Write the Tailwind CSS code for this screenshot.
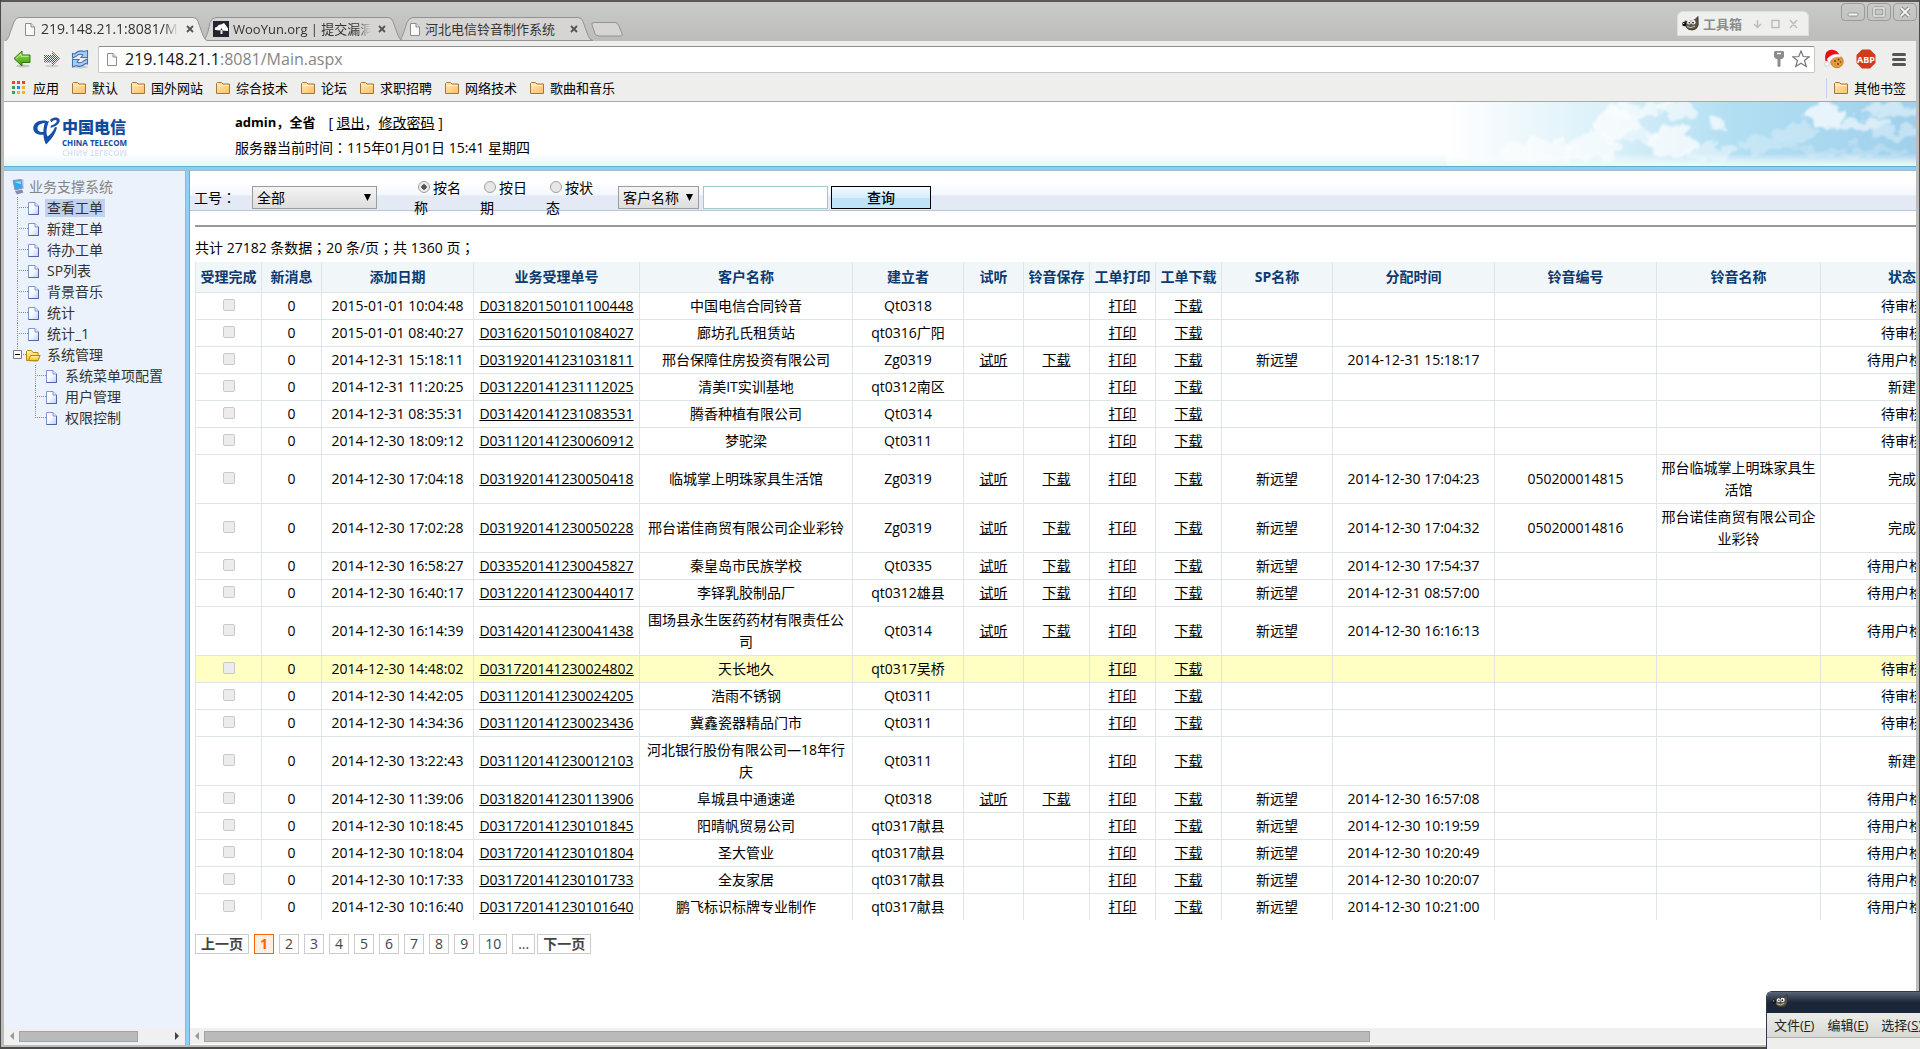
<!DOCTYPE html>
<html lang="zh-CN">
<head>
<meta charset="utf-8">
<title>219.148.21.1:8081/Main.aspx</title>
<script src="https://cdn.jsdelivr.net/npm/@tailwindcss/browser@4"></script>
</head>
<body class="font-['Open_Sans','Noto_Sans_CJK_SC',sans-serif] text-sm leading-5 text-black">
<svg class="absolute h-0 w-0" aria-hidden="true">
  <defs>
    <linearGradient id="gFolder" x1="0" y1="0" x2="1" y2="1"><stop offset="0" stop-color="#ffe9b8"/><stop offset="1" stop-color="#fdbf66"/></linearGradient>
    <linearGradient id="gDoc" x1="0" y1="0" x2="1" y2="1"><stop offset="0" stop-color="#ffffff"/><stop offset=".5" stop-color="#f4f8ff"/><stop offset="1" stop-color="#b9cdf3"/></linearGradient>
    <linearGradient id="gGreen" x1="0" y1="0" x2="0" y2="1"><stop offset="0" stop-color="#9be04e"/><stop offset="1" stop-color="#3d9a12"/></linearGradient>
    <linearGradient id="gYellow" x1="0" y1="0" x2="0" y2="1"><stop offset="0" stop-color="#fff6a0"/><stop offset="1" stop-color="#f2c321"/></linearGradient>
    <pattern id="pDither" width="2" height="2" patternUnits="userSpaceOnUse"><rect width="1" height="1" fill="#2f6b22"/><rect x="1" y="1" width="1" height="1" fill="#2f6b22"/></pattern>
  </defs>
  <symbol id="folder" viewBox="0 0 16 14"><path d="M1.5 12.5v-10l1-1h4l1.500 1.500h6.500v9.500z" fill="url(#gFolder)" stroke="#a5763c"/><path d="M2.500 4.500h11" stroke="#fff3d3"/></symbol>
  <symbol id="page" viewBox="0 0 12 15"><path d="M1.500 1.500h5.500l3.500 3.500v8.500h-9z" fill="#fafafa" stroke="#8d8d8d"/><path d="M7 1.500v3.500h3.500" fill="#e4e4e4" stroke="#8d8d8d"/></symbol>
  <symbol id="doc" viewBox="0 0 13 15"><path d="M1.500 1.500h6.500l3.500 3.500v8.500h-10z" fill="url(#gDoc)" stroke="#7f97cf"/><path d="M8 1.500v3.500h3.500" fill="#dfe9fb" stroke="#7f97cf"/><path d="M11.500 5v8.500h-10" fill="none" stroke="#4e64a6"/></symbol>
  <symbol id="gimp" viewBox="0 0 17 15"><path d="M3 5l3 0.500 4-.5 3-1.500L16 .5l.2 8.500q-1 4.500-5.500 5-4.500.5-7-3.500z" fill="#5a5548" stroke="#2e2c26" stroke-width=".8"/><circle cx="7" cy="6.500" r="2" fill="#fff"/><circle cx="11.300" cy="6.300" r="2.200" fill="#fff"/><circle cx="7.300" cy="6.700" r=".8"/><circle cx="11" cy="6.600" r=".9"/><ellipse cx="2.200" cy="8" rx="2" ry="2.200" fill="#111"/><circle cx="1.700" cy="7.400" r=".7" fill="#ddd"/><path d="M5 10.500q4 2.500 8-.5" stroke="#d8d2c2" stroke-width=".9" fill="none"/></symbol>
</svg>

<div class="flex h-screen flex-col overflow-hidden border-x border-b-2 border-[#4d4a4a] bg-[#bcbcba]">
  <!-- title bar with tabs -->
  <header class="relative flex h-[41px] shrink-0 items-end justify-between border-t-2 border-[#5b5757] bg-linear-to-b from-[#cacac8] to-[#bcbcba]">
    <nav class="relative flex h-6 items-end pl-1 text-[13px] text-[#333]">
      <svg class="absolute left-1 top-0 h-6 w-[620px]" viewBox="0 0 620 24" fill="none">
        <path d="M392 23.500c4 0 5-3 7-9l3-9q2-5 6-5h165q4 0 5 4l5 14q2 5 5 5z" fill="#d7d5d4" stroke="#949391"/>
        <path d="M196 23.500c4 0 5-3 7-9l2-9q2-5 6-5h172q4 0 5 4l5 14q2 5 5 5z" fill="#d7d5d4" stroke="#949391"/>
        <path d="M0 24c3-1 4-5 5-8l4-11q2-4.500 5-4.500h174q4 0 5 4l5 14q2 5 5 5.500z" fill="#eeeeec"/>
        <path d="M0 24c3-1 4-5 5-8l4-11q2-4.500 5-4.500h174q4 0 5 4l5 14q2 5 5 5.500" stroke="#949391"/>
        <path d="M587 8q-1-2.500 2-2.500h21q2.500 0 3.500 2.500l3.500 8.500q1 2.500-1 2.500h-22q-3 0-4-2.500z" fill="#d7d5d4" stroke="#949391"/>
      </svg>
      <a href="#" class="relative flex h-6 w-[198px] items-center pl-[19px]"><svg class="mr-[5px] h-[15px] w-3 shrink-0"><use href="#page"/></svg><span class="w-[137px] overflow-hidden whitespace-nowrap text-sm mask-r-from-90%">219.148.21.1:8081/Ma</span></a>
      <button aria-label="关闭标签页" class="absolute left-[185px] top-2 h-2 w-2"><svg viewBox="0 0 8 8"><path d="M1 1l6 6M7 1l-6 6" stroke="#555" stroke-width="1.800"/></svg></button>
      <a href="#" class="relative flex h-6 w-[196px] items-center pl-[10px]"><svg class="mr-1 h-4 w-4 shrink-0" viewBox="0 0 16 16"><rect width="16" height="16" fill="#23252e"/><path d="M2 9q-1-3 2-3 1-3 4-2.500L11 2l3 4q1.500 1 1 4z" fill="#fff"/><path d="M6 12h5l-2.500-5z" fill="#23252e"/><path d="M7.500 9h2v4h-2z" fill="#e8e8e8"/></svg><span class="w-[138px] overflow-hidden whitespace-nowrap mask-r-from-90%">WooYun.org | 提交漏洞</span></a>
      <button aria-label="关闭标签页" class="absolute left-[377px] top-2 h-2 w-2"><svg viewBox="0 0 8 8"><path d="M1 1l6 6M7 1l-6 6" stroke="#555" stroke-width="1.800"/></svg></button>
      <a href="#" class="relative flex h-6 w-[180px] items-center pl-[10px]"><svg class="mr-1 h-[15px] w-3 shrink-0"><use href="#page"/></svg><span class="whitespace-nowrap">河北电信铃音制作系统</span></a>
      <button aria-label="关闭标签页" class="absolute left-[569px] top-2 h-2 w-2"><svg viewBox="0 0 8 8"><path d="M1 1l6 6M7 1l-6 6" stroke="#555" stroke-width="1.800"/></svg></button>
    </nav>
    <div class="flex h-full items-start pr-[2px]">
      <div class="mr-8 mt-[9px] flex h-[25px] w-[132px] items-center gap-1 rounded-t-md border border-[#dededc] bg-[#efefed] pl-1 text-[13px] font-bold text-[#8c8c8a]">
        <svg class="h-[15px] w-[17px]"><use href="#gimp"/></svg><span class="w-[42px]">工具箱</span>
        <svg class="ml-1 h-3 w-[46px]" viewBox="0 0 46 12" fill="none" stroke="#bdbdbb" stroke-width="1.500"><path d="M4.500 2v7M1 6l3.500 3.500L8 6M19 2.500h7v7h-7zM37 2l7 8M44 2l-7 8"/></svg>
      </div>
      <div class="mt-[1px] flex gap-[2px]">
        <button aria-label="最小化" class="h-[18px] w-6 rounded-sm border border-[#9b9b99]"><svg viewBox="0 0 22 16"><rect x="6" y="9" width="10" height="3" rx="1" fill="#f4f4f4" stroke="#888" stroke-width=".8"/></svg></button>
        <button aria-label="最大化" class="h-[18px] w-6 rounded-sm border border-[#9b9b99]"><svg viewBox="0 0 22 16" fill="none"><rect x="6" y="4" width="10" height="8" rx="1" stroke="#888" stroke-width="3"/><rect x="6" y="4" width="10" height="8" stroke="#f4f4f4" stroke-width="1.400"/></svg></button>
        <button aria-label="关闭" class="h-[18px] w-6 rounded-sm border border-[#9b9b99]"><svg viewBox="0 0 22 16" fill="none"><path d="M7 4l8 8M15 4l-8 8" stroke="#888" stroke-width="4"/><path d="M7 4l8 8M15 4l-8 8" stroke="#f4f4f4" stroke-width="2"/></svg></button>
      </div>
    </div>
  </header>

  <div class="mx-[3px] mb-[2px] flex min-h-0 flex-1 flex-col bg-white">
    <!-- address bar -->
    <div class="flex h-9 shrink-0 items-center bg-[#eeeeec] pl-[9px] pr-[10px]">
      <button aria-label="后退" class="mr-3"><svg class="h-[18px] w-[18px]" viewBox="0 0 18 18"><ellipse cx="10" cy="16" rx="7" ry="1.500" fill="#c4c4c0"/><path d="M1 8.500L9 1v4h8v7.500H9V16z" fill="url(#gGreen)" stroke="#2d7a0c"/><path d="M3 8.500L8 4v2.300h7.500" stroke="#c9f29c" fill="none"/></svg></button>
      <button aria-label="前进" class="mr-[9px]"><svg class="h-[18px] w-[18px]" viewBox="0 0 18 18"><ellipse cx="9" cy="16" rx="7" ry="1.500" fill="#d2d2ce"/><path d="M17 8.500L9 1v4H1v7.500h8V16z" fill="url(#pDither)"/></svg></button>
      <button aria-label="重新加载" class="mr-2"><svg class="h-5 w-5" viewBox="0 0 20 20"><ellipse cx="10" cy="18" rx="8" ry="1.500" fill="#c9cdd2"/><path d="M2.500 9V4.500L4.500 5Q9 .5 14 2.500L17.500 1.500V8.500H11l2-2.500Q9 4 6.500 7z" fill="#a9cdf2" stroke="#3f73b8" stroke-width="1.100"/><path d="M17.500 10v5l-2-.500Q11 19 6 16.500L2.500 18v-7.500H9L7 13q4 2 6.500-1z" fill="#a9cdf2" stroke="#3f73b8" stroke-width="1.100"/></svg></button>
      <div class="relative flex h-[27px] flex-1 items-center rounded-xs border border-[#c6c6c4] border-t-[#8e8e8c] bg-white pl-[7px] pr-1">
        <svg class="mr-[7px] h-[15px] w-3"><use href="#page"/></svg>
        <a href="#" class="flex-1 text-base text-[#868686]"><span class="text-[#111]">219.148.21.1</span>:8081/Main.aspx</a>
        <svg class="mr-2 h-4 w-[10px]" viewBox="0 0 10 16"><path d="M1 0h8l1 1v5l-2 2H6.500v7l-1 1h-1l-1-1V8H2L0 6V1z" fill="#8c8c8c"/><path d="M3 2.500h4" stroke="#fff" stroke-width="1.400"/></svg>
        <svg class="h-[18px] w-[18px]" viewBox="0 0 18 18"><path d="M9 1l2.200 5.500 6 .3-4.700 3.700 1.700 6L9 13.200 3.800 16.500l1.700-6L.8 6.800l6-.3z" fill="#fff" stroke="#777" stroke-width="1.200"/></svg>
      </div>
      <svg class="ml-[9px] h-5 w-5" viewBox="0 0 20 20"><circle cx="13" cy="12.500" r="6.300" fill="#e29a3c" stroke="#b9701f" stroke-width=".7"/><g fill="#6b3410"><circle cx="11" cy="12" r=".9"/><circle cx="14.500" cy="10.500" r=".9"/><circle cx="14" cy="15" r=".9"/><circle cx="16.500" cy="13" r=".8"/></g><path d="M1.500 12Q-.5 2 7 .800 13 0 16 7l-5 1-8 4z" fill="#e80f12"/><path d="M3 10q5-6 13-4.500l.5 2.500Q9 7 5 13.500z" fill="#fff" stroke="#ddd" stroke-width=".4"/><circle cx="3" cy="15" r="2.300" fill="#fff" stroke="#bbb" stroke-width=".6"/></svg>
      <svg class="ml-3 h-5 w-5" viewBox="0 0 20 20"><path d="M6 .500h8L19.500 6v8L14 19.500H6L.5 14V6z" fill="#d33a1c"/><text x="10" y="13.500" text-anchor="middle" class="fill-white font-['Open_Sans',sans-serif] text-[9px] font-bold">ABP</text></svg>
      <button aria-label="菜单" class="ml-4 flex w-[14px] flex-col gap-[2px]"><span class="h-[3px] rounded-xs bg-[#555]"></span><span class="h-[3px] rounded-xs bg-[#555]"></span><span class="h-[3px] rounded-xs bg-[#555]"></span></button>
    </div>

    <!-- bookmarks -->
    <nav class="flex h-[25px] shrink-0 items-center border-b border-[#a8a8a6] bg-[#eeeeec] pb-[3px] pl-2 pr-[10px] text-[13px]">
      <a href="#" class="mr-3 flex items-center gap-[7px]"><svg class="h-[14px] w-[14px]" viewBox="0 0 14 14"><path d="M0 0h3v3H0zM5 0h3v3H5zM10 0h3v3h-3z" fill="#e8443a"/><path d="M0 5h3v3H0z" fill="#33a35a"/><path d="M5 5h3v3H5z" fill="#2a85e8"/><path d="M10 5h3v3h-3zM5 10h3v3H5zM10 10h3v3h-3z" fill="#f0b429"/><path d="M0 10h3v3H0z" fill="#33a35a"/></svg>应用</a>
      <a href="#" class="mr-3 flex items-center gap-[5px]"><svg class="h-[14px] w-4"><use href="#folder"/></svg>默认</a>
      <a href="#" class="mr-3 flex items-center gap-[5px]"><svg class="h-[14px] w-4"><use href="#folder"/></svg>国外网站</a>
      <a href="#" class="mr-3 flex items-center gap-[5px]"><svg class="h-[14px] w-4"><use href="#folder"/></svg>综合技术</a>
      <a href="#" class="mr-3 flex items-center gap-[5px]"><svg class="h-[14px] w-4"><use href="#folder"/></svg>论坛</a>
      <a href="#" class="mr-3 flex items-center gap-[5px]"><svg class="h-[14px] w-4"><use href="#folder"/></svg>求职招聘</a>
      <a href="#" class="mr-3 flex items-center gap-[5px]"><svg class="h-[14px] w-4"><use href="#folder"/></svg>网络技术</a>
      <a href="#" class="flex items-center gap-[5px]"><svg class="h-[14px] w-4"><use href="#folder"/></svg>歌曲和音乐</a>
      <a href="#" class="ml-auto flex h-5 items-center gap-[5px] border-l border-[#c3d3e6] pl-[6px]"><svg class="h-[14px] w-4"><use href="#folder"/></svg>其他书签</a>
    </nav>

    <!-- site banner -->
    <div class="relative flex h-16 shrink-0 bg-linear-to-b from-white from-80% to-[#e6f5fd]">
      <svg class="absolute right-0 top-0 h-full w-[470px]" viewBox="0 0 470 64" preserveAspectRatio="none">
        <defs>
          <linearGradient id="sky" x1="0" x2="1"><stop offset="0" stop-color="#fff"/><stop offset=".35" stop-color="#d9f0f9"/><stop offset=".6" stop-color="#b3dff2"/><stop offset="1" stop-color="#9fd0ec"/></linearGradient>
          <linearGradient id="fade" x1="0" x2="0" y1="0" y2="1"><stop offset=".8" stop-color="#fff" stop-opacity="0"/><stop offset="1" stop-color="#eef9fe"/></linearGradient>
          <filter id="fluff" x="-5%" y="-20%" width="110%" height="140%"><feTurbulence type="fractalNoise" baseFrequency=".07" numOctaves="4" seed="4" result="n"/><feDisplacementMap in="SourceGraphic" in2="n" scale="22" xChannelSelector="R" yChannelSelector="G"/><feGaussianBlur stdDeviation=".8"/></filter>
        </defs>
        <rect width="470" height="64" fill="url(#sky)"/>
        <g filter="url(#fluff)" fill="#fff" opacity=".85">
          <ellipse cx="90" cy="50" rx="36" ry="12" opacity=".7"/><ellipse cx="145" cy="45" rx="28" ry="15" opacity=".75"/>
          <ellipse cx="168" cy="22" rx="22" ry="16" opacity=".85"/><ellipse cx="190" cy="8" rx="34" ry="7" opacity=".75"/>
          <ellipse cx="195" cy="34" rx="22" ry="9" opacity=".5"/><ellipse cx="226" cy="40" rx="26" ry="15" opacity=".85"/><ellipse cx="232" cy="8" rx="16" ry="10" opacity=".7"/>
          <ellipse cx="272" cy="22" rx="6" ry="6" opacity=".8"/><ellipse cx="265" cy="50" rx="26" ry="9" opacity=".5"/>
          <ellipse cx="320" cy="42" rx="28" ry="9" opacity=".3"/><ellipse cx="350" cy="30" rx="24" ry="8" opacity=".35"/>
          <ellipse cx="378" cy="12" rx="22" ry="10" opacity=".85"/><ellipse cx="412" cy="22" rx="34" ry="6" opacity=".7"/><ellipse cx="445" cy="8" rx="32" ry="7" opacity=".55"/><ellipse cx="450" cy="30" rx="28" ry="5" opacity=".45"/><ellipse cx="400" cy="50" rx="60" ry="5" opacity=".25"/>
        </g>
        <rect width="470" height="64" fill="url(#fade)"/>
      </svg>
      <a href="#" aria-label="中国电信" class="relative flex w-[231px] gap-[2px] pl-[29px] pt-[13px] text-[#114b9e]">
        <svg class="mt-[2px] h-7 w-[27px]" viewBox="0 0 27 28" fill="#1450a8"><path d="M14 4C5 2-1 7 .5 13c1 4 6 5.500 11 4.500v-2.500c-4 .5-7-.5-7-4C4.500 8 8 5.500 14 6z"/><path d="M12 5l4-1c-2 5-3.500 11-1.500 15.500 3-2 6-5.500 7.500-9.500l2 .5c-1.500 6-5.500 12-11 17-2.500-5-4-13-1-22.500z"/><path d="M17 3c2-3 8-3.500 9.500-.5 1 3-2.500 7-9 8.500l.5-2.500c4-1 6.500-3.500 5.500-5-1-1-3.500-.5-5 2z"/></svg>
        <span class="flex flex-col">
          <span class="text-base font-black leading-6">中国电信</span>
          <span class="text-[8px] font-bold leading-2">CHINA TELECOM</span>
          <span aria-hidden="true" class="-scale-y-100 text-[8px] font-bold leading-3 opacity-15">CHINA TELECOM</span>
        </span>
      </a>
      <div class="relative pt-[10px]">
        <p class="flex gap-[13px]"><b class="text-[13px]">admin<span class="font-['Noto_Sans_CJK_TC',sans-serif]">，</span>全省</b><span>[ <a href="#" class="underline">退出</a><span class="font-['Noto_Sans_CJK_TC',sans-serif]">，</span><a href="#" class="underline">修改密码</a> ]</span></p>
        <p class="mt-1">服务器当前时间<span class="font-['Noto_Sans_CJK_TC',sans-serif]" lang="zh-TW">：</span>115年01月01日 15:41 星期四</p>
      </div>
    </div>
    <div class="h-[5px] shrink-0 border-y border-t-[#5fb1cf] border-b-[#a8b8c4] bg-[#87cff5]"></div>

    <div class="flex min-h-0 flex-1">
      <!-- menu tree -->
      <aside class="flex w-[181px] shrink-0 flex-col bg-[#ebf2fb]">
        <div class="flex-1 pl-2 pt-[5px] leading-[21px] text-[#333]">
          <div class="flex h-[21px] items-center gap-1 text-[#858585]"><svg class="h-4 w-[13px]" viewBox="0 0 13 16"><path d="M1 1.500L9.500 .500 11 9 3 11z" fill="#3aa5ef" stroke="#8a93b8"/><path d="M2.500 3l6-.800.500 3z" fill="#9be0ff"/><path d="M9.500.500h2v9l-.5.500z" fill="#b9c0dc"/><path d="M3 12l7-1.500 1.500 3L5 15.500z" fill="#8c88b4"/></svg>业务支撑系统</div>
          <ul id="tree"></ul>
          <div class="-ml-[1px] flex h-[21px] items-center"><svg class="mr-[2px] h-[21px] w-[30px] shrink-0" viewBox="0 0 30 21"><path d="M6.500 0v6M12 10.500h4" stroke="#8c8c8c" stroke-dasharray="1 1"/><path d="M2.500 6.500h8v8h-8z" fill="#fff" stroke="#7d7d7d"/><path d="M4 10.500h5" stroke="#000"/><path d="M15.500 16.500v-9l1-1h4l1.500 2h5v3h2l-2.500 5.500z" fill="url(#gYellow)" stroke="#b48a12"/><path d="M17.500 16.500l2-5h9.500l-2 5z" fill="url(#gYellow)" stroke="#b48a12"/></svg><a href="#" class="px-1">系统管理</a></div>
          <ul id="subtree" class="pl-[18px]"></ul>
        </div>
        <div class="mb-px flex h-4 shrink-0 items-center bg-[#f0f0f0] px-1">
          <svg class="mr-[3px] h-2 w-2" viewBox="0 0 8 8"><path d="M6 0v8L2 4z" fill="#9a9a9a"/></svg>
          <div class="h-[11px] w-[119px] border border-[#a3a3a3] bg-[#bababa]"></div>
          <svg class="ml-auto h-2 w-2" viewBox="0 0 8 8"><path d="M2 0v8l4-4z" fill="#444"/></svg>
        </div>
      </aside>
      <div class="w-[5px] shrink-0 border-x border-l-[#9fb4c2] border-r-[#5fb1cf] bg-[#8ed0f6]"></div>

      <!-- work orders -->
      <main class="flex min-w-0 flex-1 flex-col">
        <div class="min-h-0 flex-1 overflow-hidden">
          <form class="flex h-10 items-center border-b border-[#b3c7d9] bg-linear-to-b from-white from-25% via-[#f4f8fd] via-60% to-[#e3e9f5] to-65% pl-1 pt-[14px]">
            <label for="gh" class="w-[58px] whitespace-nowrap">工号<span class="font-['Noto_Sans_CJK_TC',sans-serif]" lang="zh-TW">：</span></label>
            <span class="relative"><select id="gh" class="h-[23px] w-[125px] appearance-none border border-[#9c9c9c] bg-linear-to-b from-[#f4f4f4] to-[#dedede] px-1 text-sm leading-5"><option>全部</option></select><svg class="pointer-events-none absolute right-[6px] top-[8px] h-[7px] w-[7px]" viewBox="0 0 7 7"><path d="M0 0h7L3.500 7z"/></svg></span>
            <fieldset class="ml-[37px] flex leading-5">
              <label class="mr-[17px] w-[49px]"><input type="radio" name="k" checked class="mr-[3px] ml-1 h-3 w-3 appearance-none rounded-full border border-[#a0a0a0] bg-radial from-[#555] from-35% to-[#eaeaea] to-40% align-[0px]">按名称</label>
              <label class="mr-[17px] w-[49px]"><input type="radio" name="k" class="mr-[3px] ml-1 h-3 w-3 appearance-none rounded-full border border-[#a0a0a0] bg-[#e6e6e6] align-[0px]">按日期</label>
              <label class="w-[49px]"><input type="radio" name="k" class="mr-[3px] ml-1 h-3 w-3 appearance-none rounded-full border border-[#a0a0a0] bg-[#e6e6e6] align-[0px]">按状态</label>
            </fieldset>
            <span class="relative ml-[23px]"><select aria-label="查询字段" class="h-[23px] w-[81px] appearance-none border border-[#9c9c9c] bg-linear-to-b from-[#f4f4f4] to-[#dedede] px-1 leading-5"><option>客户名称</option></select><svg class="pointer-events-none absolute right-[6px] top-[8px] h-[7px] w-[7px]" viewBox="0 0 7 7"><path d="M0 0h7L3.500 7z"/></svg></span>
            <input type="text" aria-label="关键字" class="ml-1 h-[23px] w-[125px] border border-[#a5c7cc] bg-white">
            <button type="button" class="ml-[3px] h-[23px] w-[100px] border border-black bg-linear-to-b from-[#f3fafe] via-[#d7eefb] via-50% to-[#bfe3f8] to-55% text-sm font-medium leading-5">查询</button>
          </form>
          <div class="ml-[5px] mt-[14px] h-[2px] bg-[#999]"></div>
          <p class="ml-[5px] mt-[10px] leading-[21px]">共计 27182 条数据<span class="font-['Noto_Sans_CJK_TC',sans-serif]" lang="zh-TW">；</span>20 条/页<span class="font-['Noto_Sans_CJK_TC',sans-serif]" lang="zh-TW">；</span>共 1360 页<span class="font-['Noto_Sans_CJK_TC',sans-serif]" lang="zh-TW">；</span></p>
          <table class="ml-[5px] mt-1 w-[1788px] table-fixed border-collapse text-center">
            <colgroup><col class="w-[66px]"><col class="w-[60px]"><col class="w-[152px]"><col class="w-[166px]"><col class="w-[213px]"><col class="w-[111px]"><col class="w-[60px]"><col class="w-[66px]"><col class="w-[66px]"><col class="w-[66px]"><col class="w-[111px]"><col class="w-[162px]"><col class="w-[162px]"><col class="w-[164px]"><col class="w-[163px]"></colgroup>
            <thead><tr id="head" class="h-[30px] border-b border-[#dfe4e6] bg-[#f1f6f9] text-[#0c3a70]"></tr></thead>
            <tbody id="rows"></tbody>
          </table>
          <nav class="ml-[5px] mt-[14px] flex gap-[5px] leading-[18px] text-[#444]" id="pager"></nav>
        </div>
        <div class="mb-px flex h-4 shrink-0 items-center bg-[#f0f0f0] pl-[3px]">
          <svg class="mr-[3px] h-2 w-2" viewBox="0 0 8 8"><path d="M6 0v8L2 4z" fill="#9a9a9a"/></svg>
          <div class="h-[11px] w-[1166px] border border-[#a3a3a3] bg-[#bababa]"></div>
        </div>
      </main>
    </div>
  </div>
</div>

<!-- second window, overlapping the lower right corner -->
<div class="absolute bottom-0 right-0 h-[58px] w-[154px] overflow-hidden rounded-tl-md border-l border-t border-[#2c3a4e] bg-[#eeeeec]">
  <div class="h-[21px] bg-linear-to-b from-[#5b6776] to-[#1b2638] to-50% pl-[5px] pt-[2px]"><svg class="h-[14px] w-4"><use href="#gimp"/></svg></div>
  <div class="flex h-[25px] items-center gap-[13px] border-b border-[#b0b0a8] bg-linear-to-b from-[#ecece9] to-[#dadad5] pl-[7px] text-[13px] whitespace-nowrap text-[#222]"><a href="#">文件(<u>F</u>)</a><a href="#">编辑(<u>E</u>)</a><a href="#">选择(<u>S</u>)</a></div>
</div>

<script>
const item = (t, on, last) => `<li class="flex h-[21px] items-center"><svg class="h-[21px] w-7 shrink-0" viewBox="0 0 28 21"><path d="M5.500 0v${last ? 11 : 21}M7 10.500h9" stroke="#8c8c8c" stroke-dasharray="1 1"/><use href="#doc" x="15" y="4" width="13" height="15"/></svg><a href="#" class="${on ? 'ml-[5px] bg-[#c1d2ee] px-[2px] leading-[18px]' : 'ml-[5px] px-[2px]'}">${t}</a></li>`;
document.getElementById('tree').innerHTML = ['查看工单','新建工单','待办工单','SP列表','背景音乐','统计','统计_1'].map((t, i) => item(t, i === 0, false)).join('');
document.getElementById('subtree').innerHTML = ['系统菜单项配置','用户管理','权限控制'].map((t, i) => item(t, false, i === 2)).join('');

document.getElementById('head').innerHTML = ['受理完成','新消息','添加日期','业务受理单号','客户名称','建立者','试听','铃音保存','工单打印','工单下载','SP名称','分配时间','铃音编号','铃音名称','状态'].map(t => `<th class="border-x border-[#dfe4e6] whitespace-nowrap p-0 font-bold">${t}</th>`).join('');

// [created, order no., customer, creator, has ringtone, assigned, ring no., ring name, status]
const data = [
['2015-01-01 10:04:48','D031820150101100448','中国电信合同铃音','Qt0318',0,'','','','待审核'],
['2015-01-01 08:40:27','D031620150101084027','廊坊孔氏租赁站','qt0316广阳',0,'','','','待审核'],
['2014-12-31 15:18:11','D031920141231031811','邢台保障住房投资有限公司','Zg0319',1,'2014-12-31 15:18:17','','','待用户检查'],
['2014-12-31 11:20:25','D031220141231112025','清美IT实训基地','qt0312南区',0,'','','','新建'],
['2014-12-31 08:35:31','D031420141231083531','腾香种植有限公司','Qt0314',0,'','','','待审核'],
['2014-12-30 18:09:12','D031120141230060912','梦驼梁','Qt0311',0,'','','','待审核'],
['2014-12-30 17:04:18','D031920141230050418','临城掌上明珠家具生活馆','Zg0319',1,'2014-12-30 17:04:23','050200014815','邢台临城掌上明珠家具生活馆','完成'],
['2014-12-30 17:02:28','D031920141230050228','邢台诺佳商贸有限公司企业彩铃','Zg0319',1,'2014-12-30 17:04:32','050200014816','邢台诺佳商贸有限公司企业彩铃','完成'],
['2014-12-30 16:58:27','D033520141230045827','秦皇岛市民族学校','Qt0335',1,'2014-12-30 17:54:37','','','待用户检查'],
['2014-12-30 16:40:17','D031220141230044017','李铎乳胶制品厂','qt0312雄县',1,'2014-12-31 08:57:00','','','待用户检查'],
['2014-12-30 16:14:39','D031420141230041438','围场县永生医药药材有限责任公司','Qt0314',1,'2014-12-30 16:16:13','','','待用户检查'],
['2014-12-30 14:48:02','D031720141230024802','天长地久','qt0317吴桥',0,'','','','待审核'],
['2014-12-30 14:42:05','D031120141230024205','浩雨不锈钢','Qt0311',0,'','','','待审核'],
['2014-12-30 14:34:36','D031120141230023436','冀鑫瓷器精品门市','Qt0311',0,'','','','待审核'],
['2014-12-30 13:22:43','D031120141230012103','河北银行股份有限公司—18年行庆','Qt0311',0,'','','','新建'],
['2014-12-30 11:39:06','D031820141230113906','阜城县中通速递','Qt0318',1,'2014-12-30 16:57:08','','','待用户检查'],
['2014-12-30 10:18:45','D031720141230101845','阳晴帆贸易公司','qt0317献县',0,'2014-12-30 10:19:59','','','待用户检查'],
['2014-12-30 10:18:04','D031720141230101804','圣大管业','qt0317献县',0,'2014-12-30 10:20:49','','','待用户检查'],
['2014-12-30 10:17:33','D031720141230101733','全友家居','qt0317献县',0,'2014-12-30 10:20:07','','','待用户检查'],
['2014-12-30 10:16:40','D031720141230101640','鹏飞标识标牌专业制作','qt0317献县',0,'2014-12-30 10:21:00','','','待用户检查']];
const link = t => `<a href="#" class="underline">${t}</a>`;
document.getElementById('rows').innerHTML = data.map((r, i) => {
  const cells = ['<input type="checkbox" disabled aria-label="受理完成" class="block mx-auto -mt-[2px] h-3 w-3 appearance-none rounded-xs border border-[#c9c9c9] bg-[#ececec]">', '0', r[0], link(r[1]), r[2], r[3], r[4] ? link('试听') : '', r[4] ? link('下载') : '', link('打印'), link('下载'), r[5] ? '新远望' : '', r[5], r[6], r[7], r[8]];
  return `<tr class="${i === 11 ? 'bg-[#ffffc4]' : ''} ${i === 19 ? '' : 'border-b border-[#dfe4e6]'}">` + cells.map(c => `<td class="h-[27px] border-x border-[#dfe4e6] px-1 py-[2px] leading-[22px]">${c}</td>`).join('') + '</tr>';
}).join('');

document.getElementById('pager').innerHTML = ['上一页','1','2','3','4','5','6','7','8','9','10','...','下一页'].map((t, i) =>
  `<a href="#" class="${i === 1 ? 'border border-[#ff6600] bg-[#ffeee4] px-[5px] font-bold text-[#ff6600]' : i === 0 ? 'border border-[#ccc] px-[5px] font-bold' : i === 12 ? '-ml-[3px] border border-[#ccc] px-[5px] font-bold' : 'border border-[#ccc] px-[5px]'}">${t}</a>`).join('');
</script>
</body>
</html>
